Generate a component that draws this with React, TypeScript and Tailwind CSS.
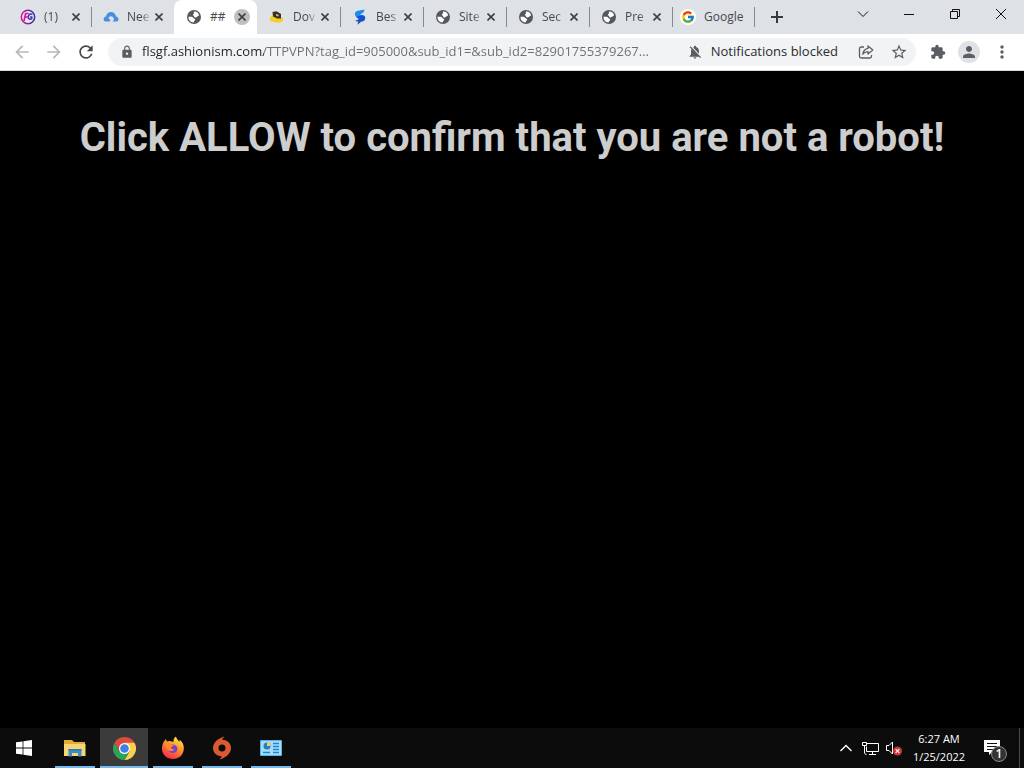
import type { ReactNode } from "react";
import clsx from "clsx";
import { FcGoogle } from "react-icons/fc";
import {
  MdArrowBack,
  MdArrowForward,
  MdExtension,
  MdLock,
  MdMoreVert,
  MdNotificationsOff,
  MdPerson,
  MdRefresh,
  MdStarBorder,
} from "react-icons/md";

type TabItem = {
  title: string;
  icon: ReactNode;
  active?: boolean;
  divider?: boolean;
};

const TABS: TabItem[] = [
  { title: "(1)", icon: <FgIcon />, divider: true },
  { title: "Nee", icon: <CloudIcon /> },
  { title: "##", icon: <GlobeIcon />, active: true },
  { title: "Dov", icon: <BoxIcon />, divider: true },
  { title: "Bes", icon: <BoltIcon />, divider: true },
  { title: "Site", icon: <GlobeIcon />, divider: true },
  { title: "Sec", icon: <GlobeIcon />, divider: true },
  { title: "Pre", icon: <GlobeIcon />, divider: true },
];

const URL_TEXT =
  "flsgf.ashionism.com/TTPVPN?tag_id=905000&sub_id1=&sub_id2=82901755379267...";

export default function App() {
  return (
    <div className="flex min-h-screen flex-col bg-black font-['Open_Sans','Noto_Sans',sans-serif]">
      <TabStrip />
      <Toolbar />
      <main className="flex-1 px-5 pt-10 text-center">
        <h1 className="font-[Roboto,sans-serif] text-[40px] leading-[54px] font-bold text-[#cdcdcd]">
          Click ALLOW to confirm that you are not a robot!
        </h1>
      </main>
      <Taskbar />
    </div>
  );
}

/* ------------------------- Browser chrome ------------------------- */

function TabStrip() {
  return (
    <header className="flex h-[34px] items-stretch bg-[#dee1e6] pl-2">
      <div role="tablist" className="flex">
        {TABS.map((tab) => (
          <Tab key={tab.title} {...tab} />
        ))}
        <div role="tab" className="flex w-[83px] items-center gap-2 pl-2">
          <FcGoogle className="h-4 w-4 rounded-full bg-white p-px" />
          <span className="text-xs text-[#45494d]">Google</span>
          <span className="ml-auto h-5 w-px bg-[#85888d]" />
        </div>
      </div>
      <button
        aria-label="New tab"
        className="ml-3 flex w-5 items-center justify-center text-[#36393d]"
      >
        <svg viewBox="0 0 12 12" className="h-3 w-3 stroke-current" aria-hidden>
          <path d="M6 0v12M0 6h12" strokeWidth="2" />
        </svg>
      </button>
      <div className="ml-auto flex h-7 text-[#111]">
        <WindowButton label="Search tabs">
          <path d="M1 3.5 6 8.5 11 3.5" />
        </WindowButton>
        <WindowButton label="Minimize">
          <path d="M1 6.5h10" />
        </WindowButton>
        <WindowButton label="Restore">
          <path d="M1.5 3.5h7v7h-7zM3.5 3.5v-2h7v7h-2" />
        </WindowButton>
        <WindowButton label="Close">
          <path d="M1 1l10 10M11 1 1 11" />
        </WindowButton>
      </div>
    </header>
  );
}

function Tab({ title, icon, active, divider }: TabItem) {
  return (
    <div
      role="tab"
      aria-selected={!!active}
      className={clsx(
        "flex w-[83px] items-center pl-3",
        active && "rounded-t-lg bg-white"
      )}
    >
      <span className="h-4 w-4 shrink-0">{icon}</span>
      <span
        className={clsx(
          "ml-2 w-6 text-xs whitespace-nowrap text-[#45494d]",
          !active && "mask-r-from-60% mask-r-to-100%"
        )}
      >
        {title}
      </span>
      <button
        aria-label={`Close ${title}`}
        className={clsx(
          "flex h-4 w-4 shrink-0 items-center justify-center rounded-full text-[#3c4043]",
          active && "bg-[#bdbfc1]"
        )}
      >
        <svg viewBox="0 0 8 8" className="h-2 w-2 stroke-current" aria-hidden>
          <path d="m.5.5 7 7m0-7-7 7" strokeWidth="1.600" />
        </svg>
      </button>
      {divider && <span className="-mr-px ml-auto h-5 w-px bg-[#85888d]" />}
    </div>
  );
}

function WindowButton({
  label,
  children,
}: {
  label: string;
  children: ReactNode;
}) {
  return (
    <button
      aria-label={label}
      className="flex w-[46px] items-center justify-center"
    >
      <svg
        viewBox="0 0 12 12"
        className="h-3 w-3 fill-none stroke-current"
        aria-hidden
      >
        {children}
      </svg>
    </button>
  );
}

function Toolbar() {
  return (
    <nav className="flex h-[37px] items-center border-b border-[#d5d7da] bg-white pr-3 pl-3 text-[#5a5e63]">
      <button aria-label="Back" className="text-[#b6b8ba]">
        <MdArrowBack className="h-5 w-5" />
      </button>
      <button aria-label="Forward" className="ml-3 text-[#b6b8ba]">
        <MdArrowForward className="h-5 w-5" />
      </button>
      <button aria-label="Reload" className="ml-3 text-[#45494d]">
        <MdRefresh className="h-5 w-5" />
      </button>
      <div className="ml-3 flex h-7 flex-1 items-center rounded-full bg-[#f1f3f4] pr-2 pl-3">
        <MdLock className="h-[14px] w-[14px] shrink-0" />
        <input
          type="text"
          aria-label="Address"
          readOnly
          value={URL_TEXT}
          className="ml-2 min-w-0 flex-1 bg-linear-to-r from-[#202124] from-[122px] to-[#6b6f74] to-[122px] bg-clip-text text-[13px] text-transparent outline-none"
        />
        <MdNotificationsOff className="ml-3 h-4 w-4 shrink-0" />
        <span className="ml-2 text-[13px] text-[#2a2c30]">
          Notifications blocked
        </span>
        <button aria-label="Share this page" className="ml-5">
          <ShareIcon />
        </button>
        <button aria-label="Bookmark this tab" className="ml-4">
          <MdStarBorder className="h-[18px] w-[18px]" />
        </button>
      </div>
      <button aria-label="Extensions" className="ml-3.5">
        <MdExtension className="h-4 w-4" />
      </button>
      <button
        aria-label="Profile"
        className="ml-3 flex h-[22px] w-[22px] items-center justify-center rounded-full bg-[#dee1e6]"
      >
        <MdPerson className="h-[18px] w-[18px]" />
      </button>
      <button aria-label="Menu" className="ml-3">
        <MdMoreVert className="h-5 w-5" />
      </button>
    </nav>
  );
}

/* ------------------------- Taskbar ------------------------- */

function Taskbar() {
  return (
    <footer className="flex h-10 bg-[#0c0c0c] text-white">
      <button
        aria-label="Start"
        className="mr-[3px] flex w-12 items-center justify-center"
      >
        <svg viewBox="0 0 16 16" className="h-4 w-4 fill-white" aria-hidden>
          <path d="M0 2.3 6.6 1.4v6.2H0zM7.4 1.3 16 0v7.6H7.4zM0 8.4h6.6v6.2L0 13.7zM7.4 8.4H16V16l-8.6-1.3z" />
        </svg>
      </button>
      <div className="flex gap-px">
        <TaskButton label="File Explorer">
          <ExplorerIcon />
        </TaskButton>
        <TaskButton label="Google Chrome" active>
          <ChromeIcon />
        </TaskButton>
        <TaskButton label="Firefox">
          <FirefoxIcon />
        </TaskButton>
        <TaskButton label="Origin">
          <OriginIcon />
        </TaskButton>
        <TaskButton label="Control Panel">
          <PanelIcon />
        </TaskButton>
      </div>
      <div className="ml-auto flex items-center">
        <button aria-label="Show hidden icons">
          <svg
            viewBox="0 0 12 12"
            className="h-3 w-3 fill-none stroke-white"
            aria-hidden
          >
            <path d="M.5 9 6 3.5 11.5 9" strokeWidth="1.4" />
          </svg>
        </button>
        <button aria-label="Network" className="ml-2.5">
          <svg
            viewBox="0 0 17 16"
            className="h-4 w-[17px] fill-none stroke-white"
            aria-hidden
          >
            <path d="M5 3.5h11.500v8H4.500v-5M10.500 11.500v3M7 14.500h7M.5 2.500h4v3h-4zM2.500 5.500v6.500c0 1.500.5 2.500 2 2.500" />
          </svg>
        </button>
        <button aria-label="Volume" className="ml-1.5">
          <svg viewBox="0 0 18 16" className="h-4 w-[18px]" aria-hidden>
            <path
              d="M1.500 5.500h2.500L7.500 2v12L4 10.500H1.500z"
              fill="none"
              stroke="#fff"
            />
            <circle cx="12.500" cy="11" r="4.500" fill="#d13438" />
            <path
              d="m10.700 9.200 3.600 3.600m0-3.600-3.600 3.600"
              stroke="#fff"
              strokeWidth="1.200"
            />
          </svg>
        </button>
        <time
          dateTime="2022-01-25T06:27"
          className="ml-2 w-14 text-center text-[11px] leading-[18px]"
        >
          6:27 AM
          <br />
          1/25/2022
        </time>
        <button aria-label="Notifications" className="mt-1 ml-4">
          <svg viewBox="0 0 26 24" className="h-6 w-[26px]" aria-hidden>
            <path d="M1 2h16v12H9l-3 3v-3H1z" fill="#fff" />
            <path d="M4 5.500h10M4 8.500h10M4 11.500h6" stroke="#111" />
            <circle cx="16" cy="16" r="7.500" fill="#333" stroke="#8a8a8a" />
            <text
              x="16"
              y="20"
              textAnchor="middle"
              fill="#fff"
              fontSize="12"
              fontWeight="600"
            >
              1
            </text>
          </svg>
        </button>
        <span className="ml-2.5 h-10 w-px bg-[#4a4a4a]" />
        <span className="w-1" />
      </div>
    </footer>
  );
}

function TaskButton({
  label,
  active,
  children,
}: {
  label: string;
  active?: boolean;
  children: ReactNode;
}) {
  return (
    <button
      aria-label={label}
      className={clsx(
        "flex w-12 flex-col items-center",
        active && "bg-[#3b3b3b]"
      )}
    >
      <span className="flex flex-1 items-center pt-0.5">{children}</span>
      <span
        className={clsx("h-0.5 bg-[#76b9ed]", active ? "w-full" : "w-10")}
      />
    </button>
  );
}

/* ------------------------- Icons ------------------------- */

function GlobeIcon() {
  return (
    <svg viewBox="0 0 16 16" className="h-4 w-4" aria-hidden>
      <circle cx="8" cy="8" r="7" fill="#54585d" />
      <path
        d="M8 2.600c2.200-.2 4.300 1 5.100 3.300-.5 1.100-1.500 1.200-2.100 1.900-.7.800-1.500 1-2.400.5-.8-.5-.3-1.300-1.200-1.700-.8-.4-.7-1.400.1-1.700.9-.3.100-1.300.5-2.300zM2.500 7.800h3.100c1.600 0 1.600 1.700 2.900 1.900.9.100.9 1.300.2 1.700-.8.500-.6 1.400-1.200 2C4.700 13.300 2.300 11 2.500 7.800z"
        fill="#fff"
      />
    </svg>
  );
}

function FgIcon() {
  return (
    <svg viewBox="0 0 16 16" className="h-4 w-4" aria-hidden>
      <defs>
        <linearGradient id="fg-ring">
          <stop offset="0" stopColor="#d4149a" />
          <stop offset="1" stopColor="#29379b" />
        </linearGradient>
      </defs>
      <circle
        cx="8"
        cy="8"
        r="6.700"
        fill="#f0e3f3"
        stroke="url(#fg-ring)"
        strokeWidth="1.500"
      />
      <path
        d="M4 12 5.600 4.500h3M5 8h2.700"
        fill="none"
        stroke="#d4149a"
        strokeWidth="1.600"
      />
      <path
        d="M12.500 5.500c-2-1.200-4-.2-4.300 2.300-.2 2.400 2.200 3 3.600 1.800V8H10"
        fill="none"
        stroke="#3b3ca8"
        strokeWidth="1.500"
      />
    </svg>
  );
}

function CloudIcon() {
  return (
    <svg viewBox="0 0 16 16" className="h-4 w-4" aria-hidden>
      <path
        d="M3.500 12.500H2.700C1.200 12.500.5 11.300.7 10c.1-1.300 1-2.300 2.300-2.500C3.300 4.800 5.500 3 8 3s4.800 1.800 5 4.500c1.500.2 2.500 1.300 2.500 2.800 0 1.400-.8 2.200-2 2.200H9.500L11 10.700C10.800 8.500 9.700 7.300 8 7.300S5.500 8.500 5.500 10c1.200 0 1.700.5 1.700 1.200 0 .8-.6 1.300-1.500 1.300z"
        fill="#4a8de0"
      />
    </svg>
  );
}

function BoxIcon() {
  return (
    <svg viewBox="0 0 16 16" className="h-4 w-4" aria-hidden>
      <path d="m1 8 3-1.500L14 9v3l-4.500 2L1 12z" fill="#f5cf27" />
      <path d="m3.500 3 4-.8L12 5v4.500L8 9.500l-4-2z" fill="#3b3220" />
      <path d="m7 5 3 1-1 1.600-2-.8z" fill="#c9b98a" />
    </svg>
  );
}

function BoltIcon() {
  return (
    <svg viewBox="0 0 16 16" className="h-4 w-4" aria-hidden>
      <path
        d="M12.500.5 6 1.800C3.800 2.300 2.600 3.800 3 5.800c.3 1.500 1.300 2.500 3 2.800L12 7 8 5.500l3.500-2z"
        fill="#1c8df0"
      />
      <path
        d="m4 8 6-2c2.300.3 3.500 1.500 3.200 3.500-.3 2.200-2 3-4.200 3.300L5.500 15.700l.5-3.200-3-.5 4-2z"
        fill="#1450c8"
      />
    </svg>
  );
}

function ShareIcon() {
  return (
    <svg
      viewBox="0 0 16 16"
      className="h-4 w-4 fill-none stroke-current"
      strokeWidth="1.300"
      strokeLinejoin="round"
      aria-hidden
    >
      <path d="M6 3H3.200C2.300 3 1.500 3.800 1.500 4.700v7.600c0 .9.800 1.700 1.700 1.700h8.600c.9 0 1.700-.8 1.700-1.700V11" />
      <path d="M10 2l4.800 4-4.800 4V7.700c-2.500 0-4 .8-5.200 2.500.4-3.200 2.200-5.400 5.200-5.900z" />
    </svg>
  );
}

function ExplorerIcon() {
  return (
    <svg viewBox="0 0 22 20" className="h-5 w-[22px]" aria-hidden>
      <path d="M0 2h8l2 2h11v14H0z" fill="#e2ad33" />
      <path d="M0 6h21.500v12H0z" fill="#f8d573" />
      <path d="M4.500 11h13v7.500H14V15H8v3.500H4.500z" fill="#3b8dc8" />
      <path d="M4.500 11h13v1.500h-13z" fill="#2b78b5" />
    </svg>
  );
}

function ChromeIcon() {
  return (
    <svg viewBox="0 0 48 48" className="h-[23px] w-[23px]" aria-hidden>
      <path d="M3.200 12A24 24 0 0 1 44.800 12L24 24z" fill="#dc4b3e" />
      <path d="M24 12h20.800A24 24 0 0 1 24 48l10.400-18z" fill="#fcd04b" />
      <path
        d="M3.200 12 13.600 30 24 34.500 34.400 30 24 48A24 24 0 0 1 3.200 12z"
        fill="#2da35a"
      />
      <path d="M3.200 12 13.600 30 24 24V12z" fill="#dc4b3e" />
      <circle cx="24" cy="24" r="11.500" fill="#fff" />
      <circle cx="24" cy="24" r="9" fill="#3e7fe8" />
    </svg>
  );
}

function FirefoxIcon() {
  return (
    <svg viewBox="0 0 24 24" className="h-6 w-6" aria-hidden>
      <defs>
        <linearGradient id="fox-body" x1=".8" y1="0" x2=".3" y2="1">
          <stop offset="0" stopColor="#fff04e" />
          <stop offset=".45" stopColor="#ff9526" />
          <stop offset="1" stopColor="#f4264f" />
        </linearGradient>
      </defs>
      <path
        d="M3 5.500 4.800 3l1 2.600L9 5l3.500 1c-.3-2.300.7-4.300 2.500-5.500.3 2.200 2 3.400 3.500 5.500l.2-2.200c3 2.400 4.300 5.500 4.100 9C22.500 19 18 23 12 23S1.200 19 1 13c0-3 .6-5.500 2-7.500z"
        fill="url(#fox-body)"
      />
      <path
        d="M8 10c2.500-2.300 6.500-2 8 1 1.300 3-.8 6-4 6-3 0-4.800-2-4.700-4.500z"
        fill="#7542cf"
      />
      <path
        d="M4 8c2.500-1.500 4.500-1.200 6 .5l2.700.7c0 1.300-2.500 1.500-2.700 2.500.5 1.300 1.800 1.800 3.500 1.500-1.500 2.300-4.500 2.500-6.800.6z"
        fill="#ff8a28"
      />
    </svg>
  );
}

function OriginIcon() {
  return (
    <svg viewBox="0 0 22 24" className="h-6 w-[22px]" aria-hidden>
      <path
        d="M13 1c-1.300 1-1.700 1.900-1.600 2.700C16.500 4 20 7.300 20 12c0 5.200-4.500 8.800-9.500 11-.8.300-1.500.300-1.500 0 1.300-1 1.700-1.900 1.600-2.700C5.500 20 2 16.700 2 12 2 6.800 6.500 3.200 11.500 1c.8-.3 1.500-.3 1.500 0z"
        fill="#dc5a32"
      />
      <circle cx="11" cy="12" r="3.500" fill="#0c0c0c" />
    </svg>
  );
}

function PanelIcon() {
  return (
    <svg viewBox="0 0 22 16" className="h-4 w-[22px]" aria-hidden>
      <rect width="22" height="16" rx="1" fill="#51b4e8" />
      <rect x="1" y="1" width="20" height="14" fill="#a5dcf8" />
      <circle cx="7" cy="6" r="3.500" fill="#277fc3" />
      <path d="M7 6V2.500A3.500 3.500 0 0 1 10.500 6z" fill="#f7d04e" />
      <path
        d="M13 3.500h6M13 6.500h6M13 9.500h6M3 12.500h7M13 12.500h6"
        stroke="#2386c8"
        strokeWidth="1.300"
      />
    </svg>
  );
}
